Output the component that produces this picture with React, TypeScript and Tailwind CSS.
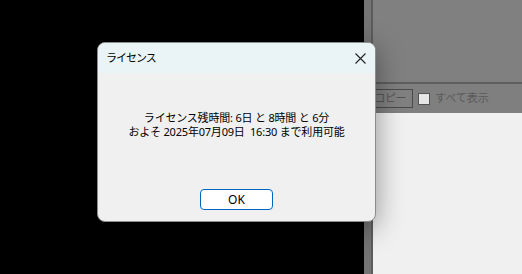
import React from 'react';

const jp = { fontFamily: '"Noto Sans", "Noto Sans CJK JP", sans-serif' };

export default function App() {
  return (
    <div className="relative flex h-[274px] w-[522px] overflow-hidden bg-black" style={jp}>
      <div className="w-[364px] shrink-0 bg-black" />

      {/* background app on the right */}
      <div className="flex flex-1">
        <div className="w-[9px] shrink-0 border-r-[2px] border-[#5c5c5c] bg-[#747474]" />
        <div className="flex flex-1 flex-col">
          <div className="h-[84px] border-b-[2px] border-[#5e5e5e] bg-[#808080]" />
          <div className="flex h-[29px] items-center gap-[5px] bg-[#7f7f7f]">
            <div className="ml-[-30px] flex h-[19px] w-[70px] shrink-0 items-center justify-end border border-[#4a4a4a] bg-[#808080] pr-[6px] text-[11px] tracking-[-0.5px] text-[#555]">
              コピー
            </div>
            <div className="h-[12px] w-[12px] shrink-0 border border-[#555] bg-[#e6e6e6]" />
            <span className="text-[11px] text-[#5a5a5a]">すべて表示</span>
          </div>
          <div className="flex-1 bg-[#f0f0f0]" />
        </div>
      </div>

      {/* dialog */}
      <div className="absolute left-[97px] top-[42px] flex h-[180px] w-[279px] flex-col overflow-hidden rounded-[8px] border border-[#8c8c8c] bg-[#f0f0f0] shadow-[0_6px_28px_rgba(0,0,0,0.4)]">
        <div className="flex h-[30px] items-center justify-between bg-[#eaf4f6] pl-[8px] pr-[9px]">
          <span className="text-[11px] tracking-[-1px] text-black">ライセンス</span>
          <svg width="11" height="11" viewBox="0 0 11 11" className="text-[#222]">
            <path d="M0.5 0.5 L10.5 10.5 M10.5 0.5 L0.5 10.5" stroke="currentColor" strokeWidth="1.1" fill="none" />
          </svg>
        </div>
        <div className="flex flex-1 flex-col items-center">
          <div className="mt-[38px] flex flex-col items-center text-[11px] leading-[14px] tracking-[-0.2px] text-black">
            <span>ライセンス残時間: 6日 と 8時間 と 6分</span>
            <span>およそ 2025年07月09日&nbsp; 16:30 まで利用可能</span>
          </div>
          <button className="mt-[50px] flex h-[21px] w-[73px] items-center justify-center rounded-[4px] border border-[#0067c0] bg-white text-[12px] text-black">
            OK
          </button>
        </div>
      </div>
    </div>
  );
}
